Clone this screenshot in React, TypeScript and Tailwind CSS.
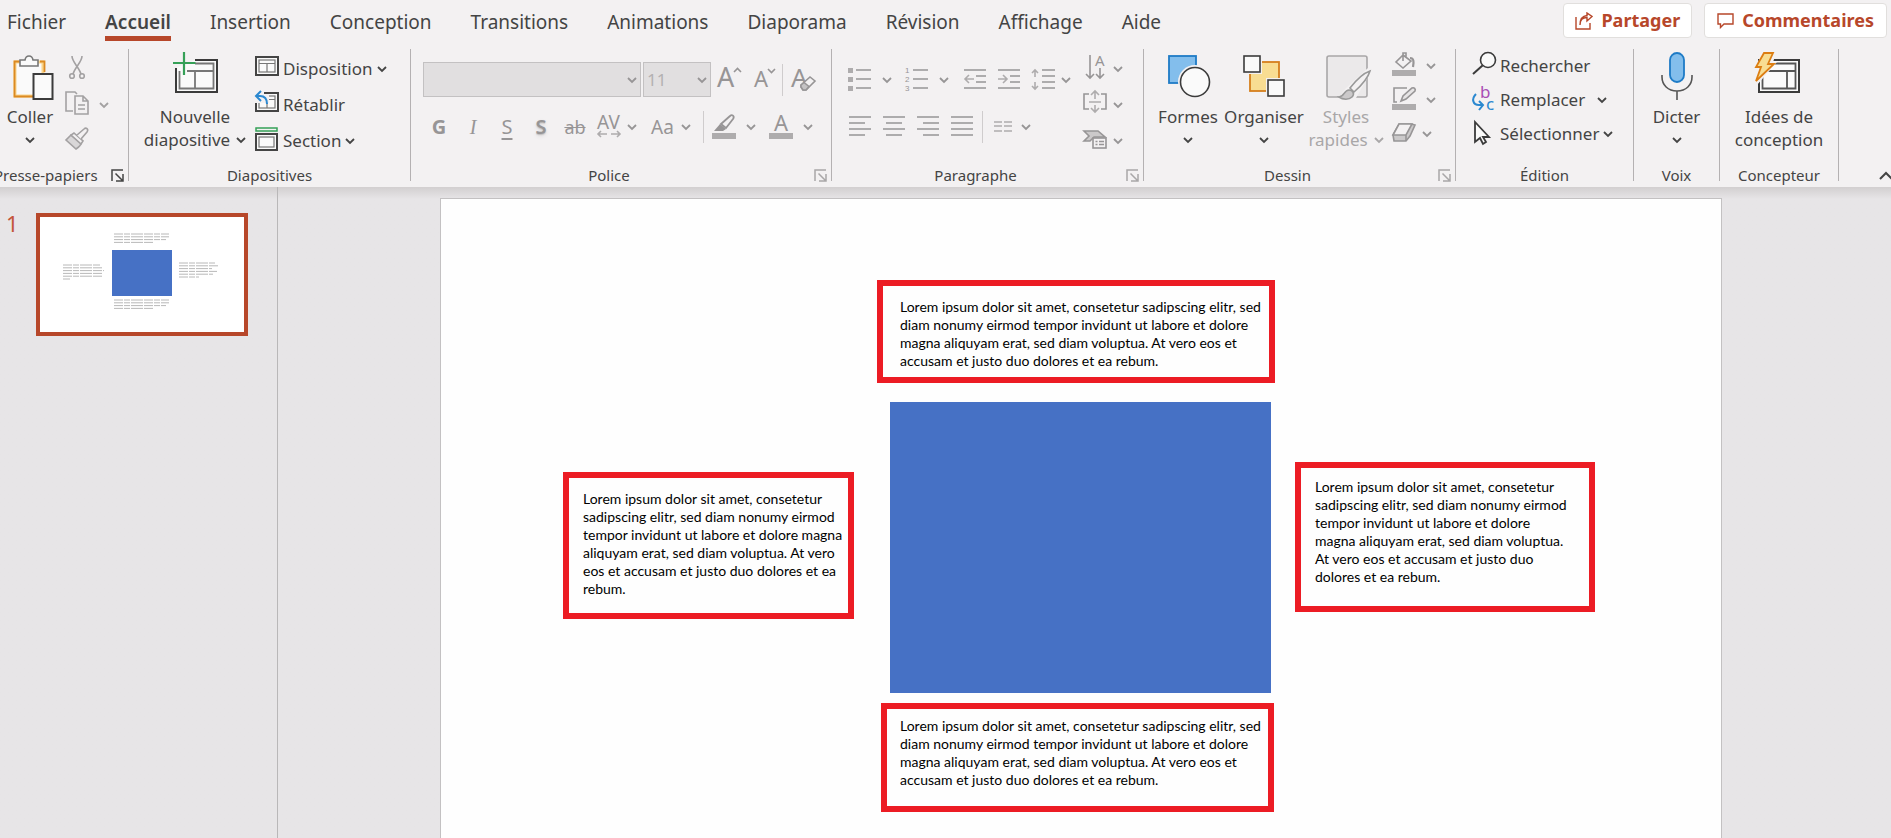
import type { ReactNode } from 'react'

const tabs = [
  'Fichier',
  'Accueil',
  'Insertion',
  'Conception',
  'Transitions',
  'Animations',
  'Diaporama',
  'Révision',
  'Affichage',
  'Aide',
]

const textBoxes = [
  {
    id: 'top',
    box: 'left-[436px] top-[81px] w-[398px] h-[103px] pl-[17px] pt-3',
    lines: [
      'Lorem ipsum dolor sit amet, consetetur sadipscing elitr, sed',
      'diam nonumy eirmod tempor invidunt ut labore et dolore',
      'magna aliquyam erat, sed diam voluptua. At vero eos et',
      'accusam et justo duo dolores et ea rebum.',
    ],
  },
  {
    id: 'left',
    box: 'left-[122px] top-[273px] w-[291px] h-[147px] pl-[14px] pt-3',
    lines: [
      'Lorem ipsum dolor sit amet, consetetur',
      'sadipscing elitr, sed diam nonumy eirmod',
      'tempor invidunt ut labore et dolore magna',
      'aliquyam erat, sed diam voluptua. At vero',
      'eos et accusam et justo duo dolores et ea',
      'rebum.',
    ],
  },
  {
    id: 'right',
    box: 'left-[854px] top-[263px] w-[300px] h-[150px] pl-[14px] pt-[10px]',
    lines: [
      'Lorem ipsum dolor sit amet, consetetur',
      'sadipscing elitr, sed diam nonumy eirmod',
      'tempor invidunt ut labore et dolore',
      'magna aliquyam erat, sed diam voluptua.',
      'At vero eos et accusam et justo duo',
      'dolores et ea rebum.',
    ],
  },
  {
    id: 'bottom',
    box: 'left-[440px] top-[504px] w-[393px] h-[109px] pl-[13px] pt-2',
    lines: [
      'Lorem ipsum dolor sit amet, consetetur sadipscing elitr, sed',
      'diam nonumy eirmod tempor invidunt ut labore et dolore',
      'magna aliquyam erat, sed diam voluptua. At vero eos et',
      'accusam et justo duo dolores et ea rebum.',
    ],
  },
]

// x, y and line widths of the text blocks in the slide miniature
const miniBlocks = [
  { x: 74, y: 17, widths: [55, 55, 52, 39] },
  { x: 23, y: 48, widths: [37, 39, 41, 40, 39, 7] },
  { x: 139, y: 46, widths: [36, 39, 33, 38, 34, 20] },
  { x: 74, y: 83, widths: [55, 55, 52, 39] },
]

const Chevron = () => (
  <svg className="w-[10px] h-[10px] shrink-0" viewBox="0 0 10 10" fill="none" stroke="currentColor" strokeWidth="1.8">
    <path d="M1 3l4 4 4-4" />
  </svg>
)

const Icon = ({ children, className = '' }: { children: ReactNode; className?: string }) => (
  <svg className={`w-6 h-6 shrink-0 overflow-visible ${className}`} viewBox="0 0 24 24" fill="none" stroke="currentColor" strokeWidth="1.6">
    {children}
  </svg>
)

const Letter = ({ x, y, size, children }: { x: number; y: number; size: number; children: string }) => (
  <text x={x} y={y} fontSize={size} fill="currentColor" stroke="none">
    {children}
  </text>
)

const BigIcon = ({ children }: { children: ReactNode }) => (
  <svg className="w-[52px] h-[54px] shrink-0" viewBox="0 0 52 54" fill="none" strokeWidth="1.6">
    {children}
  </svg>
)

const Separator = () => <div className="w-px h-[132px] shrink-0 bg-[#b4b1b2]" />

const Divider = () => <div className="w-px h-8 shrink-0 bg-[#cfcccd]" />

type GroupProps = {
  label: string
  width: string
  launcher?: 'on' | 'off'
  labelClass?: string
  children: ReactNode
}

const Group = ({ label, width, launcher, labelClass = 'justify-center', children }: GroupProps) => (
  <>
    <section aria-label={label} className={`${width} h-[136px] shrink-0 flex flex-col`}>
      <div className="flex-1 flex items-start">{children}</div>
      <div className={`h-5 relative flex items-center whitespace-nowrap text-[15px] leading-5 ${labelClass}`}>
        {label}
        {launcher && (
          <button
            aria-label={`Options ${label}`}
            className={`absolute right-1 top-1 ${launcher === 'on' ? 'text-[#444]' : 'text-[#a9a7a8]'}`}
          >
            <svg className="w-[13px] h-[13px]" viewBox="0 0 13 13" fill="none" stroke="currentColor" strokeWidth="1.5">
              <path d="M1 12V1h11M4.500 4.500l7 7M12 5v7H5" />
            </svg>
          </button>
        )}
      </div>
    </section>
    <Separator />
  </>
)

type BigButtonProps = {
  icon: ReactNode
  lines: string[]
  width: string
  menu?: boolean
  disabled?: boolean
}

const BigButton = ({ icon, lines, width, menu, disabled }: BigButtonProps) => (
  <button
    disabled={disabled}
    className={`${width} shrink-0 pt-0.5 flex flex-col items-center text-[17px] leading-6 whitespace-nowrap ${disabled ? 'text-[#a9a7a8]' : ''}`}
  >
    <BigIcon>{icon}</BigIcon>
    <span>{lines[0]}</span>
    <span className="h-6 pb-0.5 flex items-center gap-1.5">
      {lines[1]}
      {menu && <Chevron />}
    </span>
  </button>
)

type RowButtonProps = {
  icon: ReactNode
  label: string
  menu?: boolean
  height: string
  gap?: string
}

const RowButton = ({ icon, label, menu, height, gap = 'gap-1' }: RowButtonProps) => (
  <button className={`${height} flex items-center gap-1 text-[17px] whitespace-nowrap`}>
    <Icon>{icon}</Icon>
    <span className={`flex items-center ${gap}`}>
      {label}
      {menu && <Chevron />}
    </span>
  </button>
)

const ScreenIcon = () => (
  <>
    <rect x="1" y="0" width="22" height="18" fill="#fafafa" stroke="#444" strokeWidth="2" />
    <rect x="4" y="3" width="16" height="12" stroke="#777" strokeWidth="1.2" />
  </>
)

const TopBar = () => (
  <header className="h-[49px] flex items-start justify-between">
    <nav className="flex items-start gap-[39px] pl-[7px] pt-2 text-[19px] leading-7">
      {tabs.map((tab) => (
        <a
          key={tab}
          href={`#${tab.toLowerCase()}`}
          className={tab === 'Accueil' ? 'font-semibold border-b-5 border-[#b7472a]' : ''}
        >
          {tab}
        </a>
      ))}
    </nav>
    <div className="flex gap-3 pt-[3px] pr-1 text-[18px] font-bold text-[#b7472a]">
      <button className="h-[35px] px-[11px] flex items-center gap-2 rounded-sm border border-[#e1dfdd] bg-white">
        <svg className="w-[18px] h-[18px]" viewBox="0 0 18 18" fill="none" stroke="currentColor" strokeWidth="1.4">
          <path d="M1 5v12h14v-6" />
          <path d="M5 13c0-5 2.500-7.500 7-7.500V9l5-4.500L12 1v2.500C7 4 5 8 5 13z" />
        </svg>
        Partager
      </button>
      <button className="h-[35px] px-3 flex items-center gap-2 rounded-sm border border-[#e1dfdd] bg-white">
        <svg className="w-[17px] h-[17px]" viewBox="0 0 17 17" fill="none" stroke="currentColor" strokeWidth="1.4">
          <path d="M1 2h15v10H7l-3.500 3.500V12H1z" />
        </svg>
        Commentaires
      </button>
    </div>
  </header>
)

const ClipboardGroup = () => (
  <Group label="Presse-papiers" width="w-[128px]" launcher="on" labelClass="-ml-1.5 justify-start">
    <BigButton
      width="w-[60px]"
      lines={['Coller']}
      menu
      icon={
        <>
          <path d="M11 11h28v34H11z" fill="#fafafa" stroke="#f9d48c" strokeWidth="3" />
          <path d="M17 10.500h-6.500v35H29M36 10.500h4.500V21" stroke="#dc8a22" strokeWidth="1.800" />
          <path d="M16 15V9h5c.5-3 2-4 4-4s3.500 1 4 4h5v6z" fill="#fafafa" stroke="#777" />
          <rect x="29.500" y="23" width="19" height="25" fill="#fafafa" stroke="#3b3b3b" strokeWidth="2" />
        </>
      }
    />
    <div className="pl-[5px] pt-0.5 text-[#a3a1a2]">
      <button disabled aria-label="Couper" className="h-9 flex items-center">
        <Icon>
          <path d="M7-1c0 6 7 11 9 18M17-1c0 6-7 11-9 18" />
          <circle cx="7" cy="19" r="2.300" />
          <circle cx="17" cy="19" r="2.300" />
        </Icon>
      </button>
      <button disabled aria-label="Copier" className="h-9 flex items-center gap-[10px]">
        <Icon>
          <path d="M8 18H1V-1h9l2 2" />
          <path d="M10 3h8l5 5v13H10zM18 3v5h5M13 12h7M13 16h7" />
        </Icon>
        <Chevron />
      </button>
      <button disabled aria-label="Reproduire la mise en forme" className="h-9 flex items-center">
        <Icon>
          <path d="M6 6l-5 5 10 9c3-2 5-4 5-6z" fill="#d9d7d8" />
          <path d="M9 4l9 8-2 3L6 6z" fill="#f3f1f2" />
          <path d="M12 6l7-6c2-2 5 0 3 3l-6 7" fill="#f3f1f2" />
        </Icon>
      </button>
    </div>
  </Group>
)

const SlidesGroup = () => (
  <Group label="Diapositives" width="w-[281px]">
    <div className="pl-3 flex">
      <BigButton
        width="w-[108px]"
        lines={['Nouvelle', 'diapositive']}
        menu
        icon={
          <>
            <path d="M7 17V41H48V9H26" fill="#fafafa" stroke="#3b3b3b" strokeWidth="2" />
            <path d="M10.500 20V37.500H44.500V12.500H26M18 20H44M26 20V37" stroke="#777" strokeWidth="1.800" />
            <path d="M4 12H26.500M15 1V24" stroke="#35a057" strokeWidth="2.200" />
          </>
        }
      />
      <div className="pl-1.5 pt-0.5">
        <RowButton
          height="h-9"
          label="Disposition"
          menu
          icon={
            <>
              <ScreenIcon />
              <path d="M4 6.500h16M12 6.500V15" stroke="#777" strokeWidth="1.200" />
            </>
          }
        />
        <RowButton
          height="h-9"
          label="Rétablir"
          icon={
            <>
              <ScreenIcon />
              <path d="M4 6.500h16M12 6.500V15" stroke="#777" strokeWidth="1.200" />
              <path d="M-1-2h10v3h5v9H-1z" fill="#f3f1f2" stroke="none" />
              <path d="M6-2L1 3l5 5M1 3h4c5 0 7 3 7 8" stroke="#2b88d0" strokeWidth="2" />
            </>
          }
        />
        <RowButton
          height="h-9"
          label="Section"
          menu
          icon={
            <>
              <rect x="1" y="-1" width="21" height="3" stroke="#35a057" strokeWidth="1.500" />
              <rect x="1" y="5" width="21" height="16" fill="#fafafa" stroke="#444" strokeWidth="2" />
              <rect x="4" y="8" width="15" height="10" stroke="#777" strokeWidth="1.200" />
            </>
          }
        />
      </div>
    </div>
  </Group>
)

const FontGroup = () => (
  <Group label="Police" width="w-[420px]" launcher="off" labelClass="justify-center pr-6">
    <div className="pl-3 pt-[13px] text-[#979596]">
      <div className="h-[35px] flex items-center">
        <div className="relative">
          <select disabled aria-label="Police" className="w-[218px] h-[35px] appearance-none border border-[#c3c1c2] bg-[#e1dfe0]">
            <option></option>
          </select>
          <div className="absolute right-1 top-[13px] pointer-events-none">
            <Chevron />
          </div>
        </div>
        <div className="relative ml-0.5">
          <select
            disabled
            aria-label="Taille de police"
            defaultValue="11"
            className="w-[68px] h-[35px] pl-[3px] appearance-none border border-[#c3c1c2] bg-[#e1dfe0] text-[17px] text-[#b3b1b2]"
          >
            <option>11</option>
          </select>
          <div className="absolute right-1 top-[13px] pointer-events-none">
            <Chevron />
          </div>
        </div>
        <button disabled aria-label="Augmenter la taille" className="ml-[7px]">
          <Icon>
            <Letter x={-1} y={19} size={27}>A</Letter>
            <path d="M16 4l3.500-3.500L23 4" />
          </Icon>
        </button>
        <button disabled aria-label="Réduire la taille" className="ml-3">
          <Icon>
            <Letter x={0} y={19} size={22}>A</Letter>
            <path d="M14 1l3.500 3.500L21 1" />
          </Icon>
        </button>
        <div className="pl-1">
          <Divider />
        </div>
        <button disabled aria-label="Effacer la mise en forme" className="ml-2">
          <Icon>
            <Letter x={0} y={19} size={26}>A</Letter>
            <path d="M10 17l9-8 5 4-9 9h-3l-2-3z" fill="#f3f1f2" />
            <path d="M10 17l3-2.500 5 4L15 22h-3l-2-3z" fill="#c5c3c4" />
          </Icon>
        </button>
      </div>
      <div className="mt-[14px] h-8 -ml-px flex items-center">
        <button disabled aria-label="Gras" className="w-[34px] text-[20px] leading-7 font-bold">G</button>
        <button disabled aria-label="Italique" className="w-[34px] text-[20px] leading-7 italic font-['Liberation_Serif',serif]">I</button>
        <button disabled aria-label="Souligné" className="w-[34px] text-[20px] leading-7 underline underline-offset-4">S</button>
        <button disabled aria-label="Ombre" className="w-[34px] text-[20px] leading-7 font-semibold text-shadow-md">S</button>
        <button disabled aria-label="Barré" className="w-[34px] text-[18px] leading-7 line-through">ab</button>
        <button disabled aria-label="Espacement" className="ml-[5px] flex items-center gap-1.5">
          <Icon>
            <Letter x={0} y={14} size={19}>AV</Letter>
            <path d="M1 19h9M4 16l-3 3 3 3M14 19h9M20 16l3 3-3 3" stroke="#aeacad" />
          </Icon>
          <Chevron />
        </button>
        <button disabled aria-label="Modifier la casse" className="ml-[14px] w-10 flex items-center justify-between text-[19px]">
          Aa
          <Chevron />
        </button>
        <div className="pl-3">
          <Divider />
        </div>
        <button disabled aria-label="Surlignage" className="ml-2 flex items-center gap-[10px]">
          <Icon>
            <path d="M9 9l9-8c2-2 5 0 3 3l-7 9z" strokeWidth="1.800" />
            <path d="M2 16l6-7 6 5-3 2z" fill="currentColor" stroke="none" />
            <path d="M0 18h24v6H0z" fill="#aeacad" stroke="none" />
          </Icon>
          <Chevron />
        </button>
        <button disabled aria-label="Couleur de police" className="ml-[13px] flex items-center gap-[10px]">
          <Icon>
            <Letter x={5} y={16} size={22}>A</Letter>
            <path d="M0 18h24v6H0z" fill="#aeacad" stroke="none" />
          </Icon>
          <Chevron />
        </button>
      </div>
    </div>
  </Group>
)

const ParagraphGroup = () => (
  <Group label="Paragraphe" width="w-[311px]" launcher="off" labelClass="justify-center pr-6">
    <div className="pl-4 pt-[13px] text-[#979596]">
      <div className="h-[35px] flex items-center">
        <button disabled aria-label="Puces" className="flex items-center gap-[10px]">
          <Icon>
            <path d="M0 0h5v5H0zM0 9h5v5H0zM0 18h5v5H0z" fill="#aeacad" stroke="none" />
            <path d="M8 2h15M8 11h15M8 20h15" />
          </Icon>
          <Chevron />
        </button>
        <button disabled aria-label="Numérotation" className="ml-[13px] flex items-center gap-[10px]">
          <Icon className="font-['Liberation_Sans',sans-serif]">
            <path d="M8 2h15M8 11h15M8 20h15" />
            <Letter x={0} y={5} size={8}>1</Letter>
            <Letter x={0} y={14} size={8}>2</Letter>
            <Letter x={0} y={23} size={8}>3</Letter>
          </Icon>
          <Chevron />
        </button>
        <button disabled aria-label="Diminuer le retrait" className="ml-[14px]">
          <Icon>
            <path d="M1 2h22M13 8h10M13 14h10M1 20h22" />
            <path d="M2 11h9M6 7l-4 4 4 4" stroke="#aeacad" />
          </Icon>
        </button>
        <button disabled aria-label="Augmenter le retrait" className="ml-[10px]">
          <Icon>
            <path d="M1 2h22M13 8h10M13 14h10M1 20h22" />
            <path d="M1 11h9M6 7l4 4-4 4" stroke="#aeacad" />
          </Icon>
        </button>
        <button disabled aria-label="Interligne" className="ml-[10px] flex items-center gap-1.5">
          <Icon>
            <path d="M11 2h13M11 8h13M11 14h13M11 20h13" />
            <path d="M4 2v7M1 5l3-3 3 3M4 14v7M1 18l3 3 3-3" stroke="#aeacad" />
          </Icon>
          <Chevron />
        </button>
      </div>
      <div className="mt-[14px] h-8 flex items-center">
        <div className="flex gap-[10px]">
          <button disabled aria-label="Aligner à gauche">
            <Icon>
              <path d="M1 2h22M1 8h16M1 14h22M1 20h16" />
            </Icon>
          </button>
          <button disabled aria-label="Centrer">
            <Icon>
              <path d="M1 2h22M4 8h16M1 14h22M4 20h16" />
            </Icon>
          </button>
          <button disabled aria-label="Aligner à droite">
            <Icon>
              <path d="M1 2h22M7 8h16M1 14h22M7 20h16" />
            </Icon>
          </button>
          <button disabled aria-label="Justifier">
            <Icon>
              <path d="M1 2h22M1 8h22M1 14h22M1 20h22" />
            </Icon>
          </button>
        </div>
        <div className="pl-2">
          <Divider />
        </div>
        <button disabled aria-label="Colonnes" className="ml-[10px] flex items-center gap-1">
          <Icon>
            <path d="M1 7h8M11 7h8M1 11h8M11 11h8M1 16h8M11 16h8" stroke="#aeacad" />
          </Icon>
          <Chevron />
        </button>
      </div>
    </div>
    <div className="pl-3 pt-0.5 text-[#979596]">
      <button disabled aria-label="Orientation du texte" className="h-9 flex items-center gap-1.5">
        <Icon>
          <path d="M7-2v23M3 17l4 4 4-4M17 11v10M13 17l4 4 4-4" />
          <Letter x={12} y={9} size={15}>A</Letter>
        </Icon>
        <Chevron />
      </button>
      <button disabled aria-label="Aligner le texte" className="h-9 flex items-center gap-1.5">
        <Icon>
          <path d="M6 1H1v15h5M18 1h5v15h-5" />
          <path d="M12-1v7M8 2l4-4 4 4M6 9h12M12 12v7M8 15l4 4 4-4" stroke="#aeacad" />
        </Icon>
        <Chevron />
      </button>
      <button disabled aria-label="Convertir en SmartArt" className="h-9 flex items-center gap-1.5">
        <Icon>
          <path d="M1 2h14l7 6H11l-4 4H1l5-5z" fill="#cbc9ca" />
          <rect x="10" y="9" width="13" height="10" fill="#f3f1f2" />
          <path d="M12.500 12.500h2M16 12.500h5M12.500 15.500h2M16 15.500h5" />
        </Icon>
        <Chevron />
      </button>
    </div>
  </Group>
)

const DrawingGroup = () => (
  <Group label="Dessin" width="w-[311px]" launcher="off" labelClass="justify-center pr-6">
    <div className="pl-2 flex">
      <BigButton
        width="w-[72px]"
        lines={['Formes']}
        menu
        icon={
          <>
            <rect x="7" y="5" width="27" height="27" fill="#83beec" stroke="#1e7bc6" strokeWidth="1.800" />
            <circle cx="33" cy="31" r="17" fill="#f3f1f2" />
            <circle cx="33" cy="31" r="14.500" fill="#fafafa" stroke="#3b3b3b" />
          </>
        }
      />
      <BigButton
        width="w-[80px]"
        lines={['Organiser']}
        menu
        icon={
          <>
            <rect x="12" y="11" width="29" height="29" fill="#f8dd92" stroke="#d57f1d" strokeWidth="1.800" />
            <path d="M4 3h20v20H4zM28 27h20v20H28z" fill="#f3f1f2" />
            <rect x="6" y="5" width="16" height="16" fill="#fafafa" stroke="#3b3b3b" />
            <rect x="30" y="29" width="16" height="16" fill="#fafafa" stroke="#3b3b3b" />
          </>
        }
      />
      <BigButton
        width="w-[84px]"
        lines={['Styles', 'rapides']}
        menu
        disabled
        icon={
          <>
            <rect x="7" y="5" width="40" height="41" rx="2" fill="#ebe9ea" stroke="#a9a7a8" />
            <path d="M17 49l9-12 22-20 4 2-16 28-10 4z" fill="#f3f1f2" />
            <path d="M30 37c7-9 14-15 20-17-2 7-8 14-16 21z" fill="#f3f1f2" stroke="#999" />
            <path d="M19 46c5 0 5-7 10-7 4 0 6 4 3 7-3 3-9 3-13 0z" fill="#cbc9ca" stroke="#999" />
          </>
        }
      />
      <div className="pl-1 text-[#979596]">
        <button disabled aria-label="Remplissage" className="h-[34px] flex items-center gap-[10px]">
          <Icon>
            <path d="M11 1l8 6-8 7-7-6zM11 7v-8h3v5" />
            <path d="M18 4c4 0 4 4 3 9" strokeWidth="2.200" />
            <path d="M0 16h24v6H0z" fill="#aeacad" stroke="none" />
          </Icon>
          <Chevron />
        </button>
        <button disabled aria-label="Contour" className="h-[34px] flex items-center gap-[10px]">
          <Icon>
            <path d="M15 0H2v14h3" />
            <path d="M9 13l2-5 9-8c2-1 4 1 3 3l-9 8z" fill="#e6e4e5" />
            <path d="M0 16h24v6H0z" fill="#aeacad" stroke="none" />
          </Icon>
          <Chevron />
        </button>
        <button disabled aria-label="Effets" className="h-[34px] flex items-center gap-1.5">
          <Icon>
            <path d="M7 2h12l4 1-5 11-4 5H2l-1-6z" fill="#cbc9ca" />
            <path d="M7 2h13l-6 11H1zM14 13v6" fill="#f3f1f2" />
          </Icon>
          <Chevron />
        </button>
      </div>
    </div>
  </Group>
)

const EditingGroup = () => (
  <Group label="Édition" width="w-[177px]">
    <div className="pl-4">
      <RowButton
        height="h-[34px]"
        label="Rechercher"
        icon={
          <>
            <circle cx="16" cy="6" r="7.500" fill="#fafafa" stroke="#3b3b3b" />
            <path d="M10.500 11.500L1 20" stroke="#3b3b3b" strokeWidth="2" />
          </>
        }
      />
      <RowButton
        height="h-[34px]"
        label="Remplacer"
        menu
        gap="gap-3"
        icon={
          <>
            <g stroke="none" fontSize="17">
              <text x="8" y="10" fill="#a94fb5">b</text>
              <text x="14" y="22" fill="#2b88d0">c</text>
            </g>
            <path d="M4 6c-5 5-3 11 3 11h4M7 13l4 4-4 5" stroke="#2b88d0" strokeWidth="2" />
          </>
        }
      />
      <RowButton
        height="h-[34px]"
        label="Sélectionner"
        menu
        icon={<path d="M3 0v20l5-4 3 6 3-2-3-5h6z" fill="#fafafa" stroke="#3b3b3b" strokeWidth="1.800" />}
      />
    </div>
  </Group>
)

const VoiceGroup = () => (
  <Group label="Voix" width="w-[85px]">
    <BigButton
      width="w-full"
      lines={['Dicter']}
      menu
      icon={
        <>
          <rect x="19" y="2" width="14" height="29" rx="7" fill="#83beec" stroke="#1e7bc6" strokeWidth="1.800" />
          <path d="M11 24v2c0 8 6 14 15 14s15-6 15-14v-2M26 40v9" stroke="#555" />
        </>
      }
    />
  </Group>
)

const DesignerGroup = () => (
  <Group label="Concepteur" width="w-[118px]">
    <BigButton
      width="w-full"
      lines={['Idées de', 'conception']}
      icon={
        <>
          <rect x="6" y="9" width="40" height="32" fill="#fafafa" stroke="#3b3b3b" strokeWidth="2" />
          <path d="M9.500 12.500h33v25h-33zM9 20h34M34 20v17" stroke="#555" strokeWidth="1.800" />
          <path d="M10 0h14l-4 11h4L4 34H0l5-16H2z" fill="#f3f1f2" />
          <path d="M11 2h9l-5 11h6L3 30l5-14H3z" fill="#f8dd92" stroke="#dc7d12" strokeWidth="1.800" />
        </>
      }
    />
  </Group>
)

const SlidePanel = () => (
  <aside className="w-[278px] shrink-0 border-r border-[#b9b7b8] pt-[26px] pl-1.5 flex items-start">
    <span className="w-[30px] text-[22px] leading-5 text-[#c4553a]">1</span>
    <button aria-label="Diapositive 1" className="border-4 border-[#b7472a] bg-white">
      <svg className="w-[204px] h-[115px]" viewBox="0 0 204 115">
        <rect x="72" y="33" width="60" height="46" fill="#4671c5" />
        {miniBlocks.map((block) => (
          <g key={`${block.x}-${block.y}`} stroke="#a6a6a6" strokeWidth="0.8" strokeDasharray="9 1 6 1 12 1">
            {block.widths.map((width, i) => (
              <line key={i} x1={block.x} x2={block.x + width} y1={block.y + i * 2.8} y2={block.y + i * 2.8} />
            ))}
          </g>
        ))}
      </svg>
    </button>
  </aside>
)

const Slide = () => (
  <main className="flex-1 min-w-0 pl-[162px] pr-[169px] pt-[11px]">
    <div className="relative aspect-video border border-[#c3c1c2] bg-[#fefefe] font-[Lato,sans-serif] text-[14px] leading-[18px] text-black">
      <div className="absolute left-[449px] top-[203px] w-[381px] h-[291px] bg-[#4671c5]" />
      {textBoxes.map((item) => (
        <p key={item.id} className={`absolute border-6 border-[#ec1c24] whitespace-nowrap ${item.box}`}>
          {item.lines.map((line) => (
            <span key={line} className="block">
              {line}
            </span>
          ))}
        </p>
      ))}
    </div>
  </main>
)

const App = () => (
  <div className="h-screen flex flex-col overflow-hidden bg-[#e7e5e7] font-['Noto_Sans',sans-serif] text-[#444]">
    <div className="shrink-0 bg-[#f3f1f2]">
      <TopBar />
      <div className="h-[138px] flex items-start overflow-hidden">
        <ClipboardGroup />
        <SlidesGroup />
        <FontGroup />
        <ParagraphGroup />
        <DrawingGroup />
        <EditingGroup />
        <VoiceGroup />
        <DesignerGroup />
        <div className="flex-1 h-[136px] flex items-end justify-end">
          <button aria-label="Réduire le ruban" className="pb-[3px]">
            <svg className="w-3 h-3" viewBox="0 0 12 12" fill="none" stroke="currentColor" strokeWidth="2">
              <path d="M1 9l6-6 6 6" />
            </svg>
          </button>
        </div>
      </div>
    </div>
    <div className="flex-1 min-h-0 flex bg-linear-to-b from-[#d2cfd0] to-[#e7e5e7] to-[12px]">
      <SlidePanel />
      <Slide />
    </div>
  </div>
)

export default App
